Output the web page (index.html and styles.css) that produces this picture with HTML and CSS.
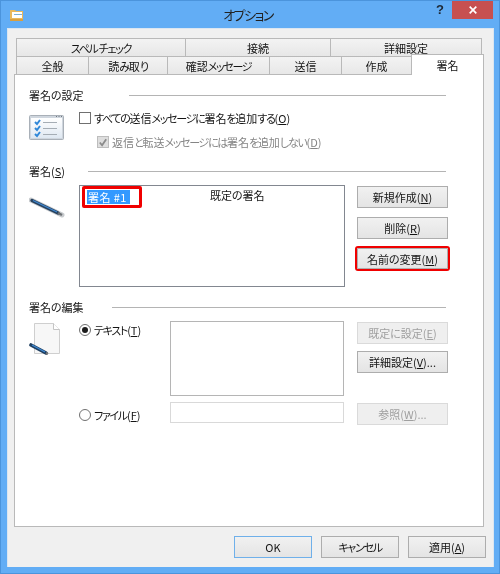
FILE: index.html
```html
<!DOCTYPE html>
<html lang="ja">
<head>
<meta charset="utf-8">
<title>オプション</title>
<link rel="stylesheet" href="styles.css">
</head>
<body>
<div class="window">
  <header class="titlebar">
    <svg class="app-icon" width="14" height="13" viewBox="0 0 14 13">
      <path d="M0 2h5l1 1h7v9H0z" fill="#e9b85c"/>
      <path d="M2 4h10v6H2z" fill="#fff"/>
      <path d="M4 6h8v1H4z" fill="#7fb2d8"/>
      <path d="M0 11h13v2H0z" fill="#d99f3f"/>
    </svg>
    <h1 class="title">オプション</h1>
    <span class="help">?</span>
    <span class="close">
      <svg width="8" height="8" viewBox="0 0 8 8"><path d="M.7.700l6.600 6.600M7.300.700L.7 7.300" stroke="#fff" stroke-width="1.700"/></svg>
    </span>
  </header>
  <div class="client">
    <nav class="tabs">
      <div class="tab-row row-top">
        <span class="tab"><span class="k">スペル チェック</span></span>
        <span class="tab">接続</span>
        <span class="tab">詳細設定</span>
      </div>
      <div class="tab-row row-bottom">
        <span class="tab">全般</span>
        <span class="tab">読<span class="k">み</span>取<span class="k">り</span></span>
        <span class="tab">確認<span class="k">メッセージ</span></span>
        <span class="tab">送信</span>
        <span class="tab">作成</span>
        <span class="tab active">署名</span>
      </div>
    </nav>
    <main class="panel">
      <section class="group group-settings">
        <h2 class="group-head"><span>署名の設定</span></h2>
        <div class="settings-body">
          <svg class="icon" width="36" height="26" viewBox="0 0 36 26">
            <defs><linearGradient id="lg" x1="0" y1="0" x2="0" y2="1"><stop offset="0" stop-color="#fff"/><stop offset="1" stop-color="#dfe8f2"/></linearGradient></defs>
            <rect x="0.500" y="0.500" width="34" height="24" rx="1" fill="#cfd6de" stroke="#a9b0b8"/>
            <rect x="2" y="3" width="31" height="20" fill="url(#lg)"/>
            <path d="M27 1.500h1M29.500 1.500h1M32 1.500h1" stroke="#707880"/>
            <path d="M6 7l2 2 3-4M6 13l2 2 3-4M6 19l2 2 3-4" fill="none" stroke="#2f87d8" stroke-width="2"/>
            <path d="M14 7.500h14M14 13.500h14M14 19.500h14" stroke="#a5adb5"/>
          </svg>
          <div class="options">
            <label class="check-row"><span class="check"></span><span><span class="k">すべての</span>送信<span class="k">メッセージに</span>署名<span class="k">を</span>追加<span class="k">する</span>(<u>O</u>)</span></label>
            <label class="check-row sub disabled"><span class="check checked">
              <svg width="11" height="11" viewBox="0 0 11 11"><path d="M2 5.500l2.500 3L9 2" fill="none" stroke="#8b8b8b" stroke-width="2"/></svg>
            </span><span>返信<span class="k">と</span>転送<span class="k">メッセージには</span>署名<span class="k">を</span>追加<span class="k">しない</span>(<u>D</u>)</span></label>
          </div>
        </div>
      </section>

      <section class="group group-list">
        <h2 class="group-head"><span>署名(<u>S</u>)</span></h2>
        <div class="list-body">
          <svg class="icon" width="36" height="22" viewBox="0 0 36 22">
            <path d="M2 3l31 15" stroke="#9aa0a6" stroke-width="5" stroke-linecap="round" opacity=".55"/>
            <path d="M3 3.500l26 12.500" stroke="#27425f" stroke-width="3.400" stroke-linecap="round"/>
            <path d="M4 3.500l24 11.500" stroke="#3f86cf" stroke-width="1.300"/>
            <path d="M29 16l4 2" stroke="#6c7074" stroke-width="2.400"/>
          </svg>
          <div class="listbox">
            <span class="marked"><span class="selected">署名 #1</span></span>
            <span class="default-sig">既定の署名</span>
          </div>
          <div class="actions">
            <button class="btn">新規作成(<u>N</u>)</button>
            <button class="btn">削除(<u>R</u>)</button>
            <button class="btn marked-btn">名前の変更(<u>M</u>)</button>
          </div>
        </div>
      </section>

      <section class="group group-edit">
        <h2 class="group-head"><span>署名の編集</span></h2>
        <div class="edit-body">
          <svg class="icon doc" width="36" height="33" viewBox="0 0 36 33">
            <path d="M5.500 .500h19l6 6v24h-25z" fill="#f7f7f7" stroke="#cfcfcf"/>
            <path d="M24.500 .500v6h6" fill="#fff" stroke="#c4c4c4"/>
            <path d="M2 22l15 8" stroke="#1f3f60" stroke-width="3.600" stroke-linecap="round"/>
            <path d="M3 22l13 7" stroke="#3f8ad4" stroke-width="1.400"/>
            <path d="M17 30l2 1" stroke="#777" stroke-width="2"/>
          </svg>
          <label class="radio-row text-radio"><span class="radio on"></span><span><span class="k">テキスト</span>(<u>T</u>)</span></label>
          <div class="textarea"></div>
          <div class="edit-actions">
            <button class="btn" disabled>既定に設定(<u>E</u>)</button>
            <button class="btn">詳細設定(<u>V</u>)...</button>
          </div>
          <label class="radio-row file-radio"><span class="radio"></span><span><span class="k">ファイル</span>(<u>F</u>)</span></label>
          <div class="file-input"></div>
          <div class="file-action"><button class="btn" disabled>参照(<u>W</u>)...</button></div>
        </div>
      </section>
    </main>
    <footer class="footer">
      <button class="btn wide default">OK</button>
      <button class="btn wide"><span class="k">キャンセル</span></button>
      <button class="btn wide">適用(<u>A</u>)</button>
    </footer>
  </div>
</div>
</body>
</html>
```

FILE: styles.css
```css
* { box-sizing: border-box; }
html, body { margin: 0; padding: 0; }
body {
  width: 500px;
  height: 574px;
  overflow: hidden;
  font-family: "Noto Sans CJK JP", "Noto Sans", sans-serif;
  font-size: 11px;
  font-feature-settings: "palt";
  color: #141414;
}
u { text-underline-offset: 1px; }
.k { letter-spacing: -1.3px; }

.window {
  width: 500px;
  height: 574px;
  background: #62adf5;
  border: 1px solid #4b94dc;
  padding: 0 5px 6px 6px;
  display: flex;
  flex-direction: column;
  filter: blur(0.3px);
}
.titlebar {
  height: 27px;
  flex: none;
  display: flex;
  align-items: flex-start;
}
.app-icon { margin: 7px 0 0 3px; flex: none; }
.title {
  margin: 5px 0 0;
  flex: 1;
  text-align: center;
  font-size: 13px;
  line-height: 18px;
  font-weight: 400;
  letter-spacing: -1.5px;
  color: #222;
  padding-left: 38px;
}
.help {
  width: 12px;
  flex: none;
  margin-top: 1px;
  margin-right: 6px;
  font: 700 13px/16px "Liberation Sans", sans-serif;
  color: #1d2733;
  text-align: center;
}
.close {
  width: 41px;
  height: 18px;
  flex: none;
  margin-right: 1px;
  background: #c75050;
  display: flex;
  align-items: center;
  justify-content: center;
}

.client {
  flex: 1;
  background: #f0f0f0;
  border: 1px solid #dbe6f1;
  border-bottom: 0;
  padding: 9px 9px 0 6px;
  display: flex;
  flex-direction: column;
}

.tabs { flex: none; }
.tab-row { display: grid; height: 18px; margin-left: 2px; }
.row-top { grid-template-columns: 169px 145px 152px; }
.row-bottom { grid-template-columns: 72px 79px 102px 72px 70px 73px; }
.tab {
  display: flex;
  align-items: center;
  justify-content: center;
  background: linear-gradient(#f3f3f3, #e7e7e7);
  border: 1px solid #b9b9b9;
  border-bottom: 0;
  border-right: 0;
  line-height: 16px;
}
.tab:last-child { border-right: 1px solid #b9b9b9; }
.tab.active {
  background: #fff;
  height: 21px;
  margin-top: -2px;
  position: relative;
  z-index: 1;
}

.panel {
  height: 453px;
  flex: none;
  background: #fff;
  border: 1px solid #b9b9b9;
  padding: 13px 35px 0 14px;
}
.group-head {
  margin: 0 2px 0 0;
  height: 16px;
  font-size: 11px;
  font-weight: 400;
  line-height: 16px;
  display: flex;
  align-items: center;
  white-space: nowrap;
}
.group-head span { margin-top: -2px; }
.group-head::after {
  content: "";
  flex: 1;
  height: 1px;
  margin-top: -1px;
  background: #b4b4b4;
}
.group-settings .group-head::after { margin-left: 45px; }
.group-list .group-head::after { margin-left: 23px; }
.group-edit .group-head::after { margin-left: 28px; }

.group-settings { height: 76px; }
.settings-body {
  display: grid;
  grid-template-columns: 50px 1fr;
  padding-top: 6px;
}
.group-settings .icon { margin-top: 5px; }
.options { display: flex; flex-direction: column; gap: 8px; }
.check-row, .radio-row {
  display: flex;
  align-items: center;
  gap: 3px;
  height: 16px;
  line-height: 16px;
  white-space: nowrap;
}
.check {
  width: 12px;
  height: 12px;
  flex: none;
  border: 1px solid #707070;
  background: #fff;
}
.check-row.sub { padding-left: 18px; }
.check-row.sub > span:last-child { margin-top: -1px; }
.check.checked {
  background: #dedede;
  border-color: #bdbdbd;
  display: flex;
  align-items: center;
  justify-content: center;
}
.disabled { color: #858585; }

.group-list { height: 136px; }
.list-body {
  display: grid;
  grid-template-columns: 50px 266px 91px;
  padding-top: 5px;
}
.group-list .icon { margin-top: 12px; }
.listbox {
  width: 266px;
  height: 102px;
  border: 1px solid #828790;
  background: #fff;
  padding: 0 0 0 2px;
  display: flex;
  align-items: flex-start;
}
.marked {
  width: 60px;
  height: 22px;
  flex: none;
  display: flex;
  align-items: flex-start;
  border: 3px solid #f00000;
  border-radius: 2px;
  padding: 1px 0 0 2px;
}
.selected {
  background: #3399ff;
  color: #fff;
  width: 43px;
  height: 14px;
  line-height: 14px;
  padding-left: 1px;
  letter-spacing: .4px;
  white-space: nowrap;
}
.default-sig { margin: 1px 0 0 68px; line-height: 16px; }

.actions {
  display: flex;
  flex-direction: column;
  margin-left: 12px;
  padding-top: 1px;
}
.btn {
  width: 91px;
  height: 22px;
  padding: 0;
  font: inherit;
  font-feature-settings: "palt";
  line-height: 18px;
  color: #141414;
  background: linear-gradient(#f1f1f1, #e4e4e4);
  border: 1px solid #adadad;
  white-space: nowrap;
}
.btn:disabled {
  background: #efefef;
  border-color: #dadada;
  color: #9f9f9f;
}
.actions .btn + .btn { margin-top: 9px; }
.actions .marked-btn {
  outline: 2px solid #f00000;
  outline-offset: 0;
  border-radius: 1px;
  margin-top: 10px;
  height: 21px;
}

.edit-body {
  display: grid;
  grid-template-columns: 50px 91px 174px 91px;
  grid-template-rows: 75px 27px;
  row-gap: 6px;
  padding-top: 5px;
}
.edit-body .icon { grid-row: 1; grid-column: 1; margin-top: 2px; }
.text-radio { grid-row: 1; grid-column: 2; align-self: start; margin-top: 1px; }
.textarea { grid-row: 1; grid-column: 3; border: 1px solid #b5b5b5; background: #fff; }
.edit-actions {
  grid-row: 1; grid-column: 4;
  margin-left: 13px;
  padding-top: 1px;
  display: flex;
  flex-direction: column;
  gap: 7px;
}
.file-radio { grid-row: 2; grid-column: 2; margin-top: 5px; }
.file-input { grid-row: 2; grid-column: 3; height: 21px; border: 1px solid #d9d9d9; background: #fff; }
.file-action { grid-row: 2; grid-column: 4; margin-left: 13px; padding-top: 1px; }
.radio {
  width: 12px;
  height: 12px;
  flex: none;
  border: 1px solid #707070;
  border-radius: 50%;
  background: #fff;
  display: flex;
  align-items: center;
  justify-content: center;
}
.radio.on::before {
  content: "";
  width: 6px;
  height: 6px;
  border-radius: 50%;
  background: #1c1c1c;
}

.footer {
  flex: none;
  display: flex;
  gap: 9px;
  padding-top: 9px;
  margin-right: -2px;
  justify-content: flex-end;
}
.btn.wide { width: 78px; }
.btn.default { border-color: #6fb0ea; }
```
